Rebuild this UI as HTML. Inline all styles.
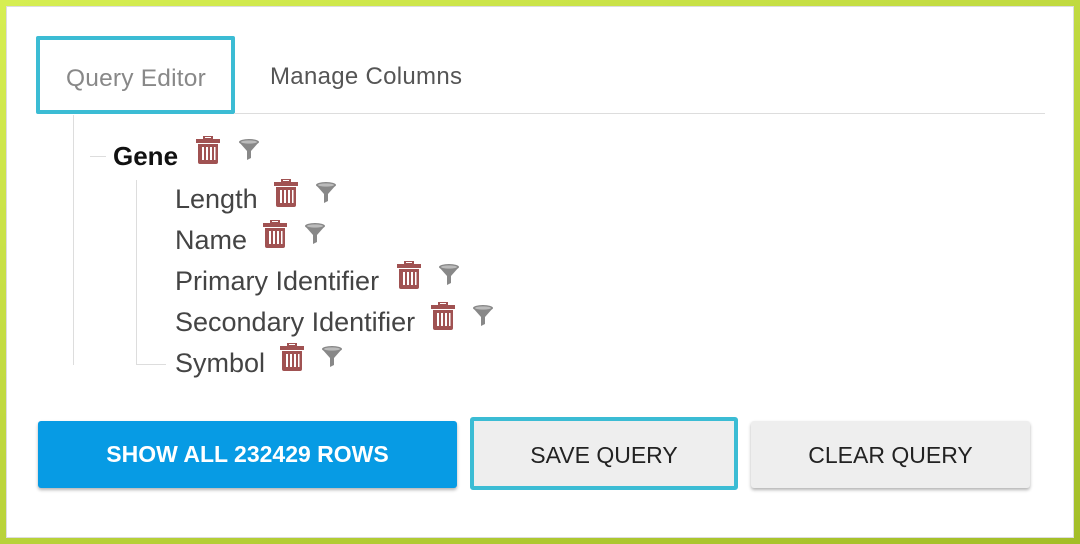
<!DOCTYPE html>
<html><head><style>
*{margin:0;padding:0;box-sizing:border-box}
body{width:1080px;height:544px;background:linear-gradient(160deg,#d6ee52,#a3be28);position:relative;font-family:"Liberation Sans",sans-serif;overflow:hidden}
.card{position:absolute;left:6px;top:6px;width:1068px;height:532px;background:#fff;border:1px solid #ddd}
.a{position:absolute}
.tab{left:36px;top:36px;width:199px;height:78px;border:4px solid #3bbcd4;border-radius:2px;color:#888;font-size:24.5px;padding:25px 0 0 26px;letter-spacing:.2px}
.t2{left:270px;top:63px;color:#555;font-size:24px;letter-spacing:.3px}
.line{background:#ddd}
.item{font-size:27px;color:#444;white-space:nowrap}
.btn{display:flex;align-items:center;justify-content:center;font-size:23px;border-radius:3px}
</style></head><body>
<div class="card"></div>
<div class="a tab">Query Editor</div>
<div class="a t2">Manage Columns</div>
<div class="a line" style="left:234px;top:113px;width:811px;height:1px"></div>
<div class="a line" style="left:73px;top:115px;width:1px;height:250px"></div>
<div class="a line" style="left:90px;top:156px;width:16px;height:1px"></div>
<div class="a line" style="left:136px;top:180px;width:1px;height:185px"></div>
<div class="a line" style="left:136px;top:364px;width:30px;height:1px"></div>

<svg width="0" height="0" style="position:absolute"><defs>
<symbol id="tr" viewBox="0 0 24 28"><rect x="8" y="0" width="8" height="3" fill="none" stroke="#a05252" stroke-width="2"/><rect x="0" y="3" width="24" height="4" fill="#a05252"/><path d="M2 8h20v18a2 2 0 0 1-2 2H4a2 2 0 0 1-2-2z" fill="#a05252"/><g fill="#fff"><rect x="6" y="11" width="2" height="13"/><rect x="10" y="11" width="2" height="13"/><rect x="14" y="11" width="2" height="13"/><rect x="18" y="11" width="1.5" height="13"/></g></symbol>
<symbol id="fn" viewBox="0 0 22 22"><ellipse cx="11" cy="3" rx="10" ry="3" fill="#888"/><path d="M1 3 L9 12 V21 L13 19 V12 L21 3z" fill="#888"/><ellipse cx="11" cy="3" rx="8" ry="1.6" fill="#bbb"/></symbol>
</defs></svg>

<div class="a" style="left:113px;top:141px;font-size:26px;font-weight:bold;color:#111">Gene</div>
<svg class="a" style="left:196px;top:136px" width="24" height="28"><use href="#tr"/></svg>
<svg class="a" style="left:238px;top:139px" width="22" height="22"><use href="#fn"/></svg>

<div class="a item" style="left:175px;top:184px">Length</div>
<svg class="a" style="left:274px;top:179px" width="24" height="28"><use href="#tr"/></svg>
<svg class="a" style="left:315px;top:182px" width="22" height="22"><use href="#fn"/></svg>

<div class="a item" style="left:175px;top:225px">Name</div>
<svg class="a" style="left:263px;top:220px" width="24" height="28"><use href="#tr"/></svg>
<svg class="a" style="left:304px;top:223px" width="22" height="22"><use href="#fn"/></svg>

<div class="a item" style="left:175px;top:266px">Primary Identifier</div>
<svg class="a" style="left:397px;top:261px" width="24" height="28"><use href="#tr"/></svg>
<svg class="a" style="left:438px;top:264px" width="22" height="22"><use href="#fn"/></svg>

<div class="a item" style="left:175px;top:307px">Secondary Identifier</div>
<svg class="a" style="left:431px;top:302px" width="24" height="28"><use href="#tr"/></svg>
<svg class="a" style="left:472px;top:305px" width="22" height="22"><use href="#fn"/></svg>

<div class="a item" style="left:175px;top:348px">Symbol</div>
<svg class="a" style="left:280px;top:343px" width="24" height="28"><use href="#tr"/></svg>
<svg class="a" style="left:321px;top:346px" width="22" height="22"><use href="#fn"/></svg>

<div class="a btn" style="left:38px;top:421px;width:419px;height:67px;background:#079be4;color:#fff;font-weight:bold;box-shadow:0 2px 3px rgba(0,0,0,.3)">SHOW ALL 232429 ROWS</div>
<div class="a btn" style="left:470px;top:417px;width:268px;height:73px;background:#eee;color:#222;border:4px solid #3bbcd4;padding-top:4px">SAVE QUERY</div>
<div class="a btn" style="left:751px;top:421px;width:279px;height:67px;background:#eee;color:#222;box-shadow:0 2px 3px rgba(0,0,0,.3);padding-top:2px">CLEAR QUERY</div>
</body></html>
